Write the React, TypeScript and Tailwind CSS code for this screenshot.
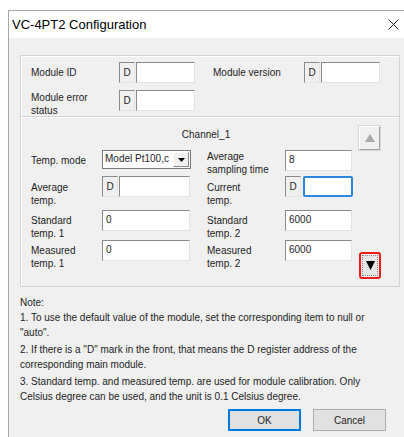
import React from 'react';

// sunken 3D edge used by the edit boxes
const sunken =
  'border border-t-[#8a8a8a] border-l-[#8a8a8a] border-b-[#e3e3e3] border-r-[#e3e3e3]';

const Label = ({ children, className = '' }: { children: React.ReactNode; className?: string }) => (
  <div className={`shrink-0 leading-[13px] text-[#1e1e1e] ${className}`}>{children}</div>
);

const Edit = ({ value = '', className = '', focus = false }: { value?: string; className?: string; focus?: boolean }) => (
  <div
    className={`h-[21px] shrink-0 bg-white px-[3px] pt-[3px] leading-[12px] ${
      focus ? 'rounded-[2px] border-2 border-[#2b86e0]' : sunken
    } ${className}`}
  >
    {value}
  </div>
);

const DTag = ({ className = '' }: { className?: string }) => (
  <div className={`flex h-[21px] w-[16px] shrink-0 items-center justify-center bg-[#f0f0f0] ${sunken} ${className}`}>D</div>
);

const DEdit = ({ className = '', focus = false, gap = 'gap-[1px]' }: { className?: string; focus?: boolean; gap?: string }) => (
  <div className={`flex shrink-0 ${gap}`}>
    <DTag />
    <Edit className={className} focus={focus} />
  </div>
);

const Combo = () => (
  <div className="flex h-[19px] w-[89px] shrink-0 border border-[#7a7a7a] bg-white">
    <div className="flex-1 overflow-hidden whitespace-nowrap pl-[2px] pt-[2px] leading-[12px]">Model Pt100,c</div>
    <div className="m-[1px] flex w-[16px] items-center justify-center border border-t-white border-l-white border-b-[#8a8a8a] border-r-[#8a8a8a] bg-[#f0f0f0]">
      <svg width="7" height="4" viewBox="0 0 7 4">
        <path d="M0 0h7L3.5 4z" fill="#000" />
      </svg>
    </div>
  </div>
);

export default function App() {
  return (
    <div className="h-[437px] w-[404px] overflow-hidden bg-white font-['Liberation_Sans',Arial,sans-serif] text-[10px] text-[#1e1e1e]">
      <div className="ml-[8px] mt-[10px] h-full border-l border-t border-[#a8a8a8] bg-[#f0f0f0]">
        {/* caption */}
        <div className="flex h-[27px] items-center justify-between bg-white pl-[3px] pr-[4px]">
          <span className="text-[13px] text-black">VC-4PT2 Configuration</span>
          <svg width="11" height="11" viewBox="0 0 11 11" className="mr-[1px]">
            <path d="M0.5 0.5l10 10M10.5 0.5l-10 10" stroke="#222" strokeWidth="1" />
          </svg>
        </div>

        <div className="pl-[11px] pr-[4px] pt-[17px]">
          {/* module box */}
          <div className="border border-[#d4d4d4] shadow-[inset_1px_1px_0_#ffffff]">
            <div className="flex flex-col gap-[7px] pb-[5px] pl-[10px] pt-[6px]">
              <div className="flex h-[21px] items-center">
                <Label className="w-[88px]">Module ID</Label>
                <DEdit className="w-[59px]" />
                <Label className="ml-[18px] w-[91px]">Module version</Label>
                <DEdit className="w-[59px]" />
              </div>
              <div className="flex h-[21px] items-start">
                <Label className="w-[88px] pt-[1px]">
                  Module error
                  <br />
                  status
                </Label>
                <DEdit className="w-[59px]" />
              </div>
            </div>

            {/* channel box */}
            <div className="grid grid-cols-[1fr_22px] border-t border-[#d4d4d4] pb-[7px] pl-[10px] pr-[18px] pt-[9px] shadow-[inset_0_1px_0_#ffffff]">
              <div className="col-span-2 col-start-1 row-start-1 pt-[3px] text-center leading-[12px]">Channel_1</div>
              <div className="col-start-2 row-start-1 flex h-[24px] w-[21px] items-center justify-center border border-t-white border-l-white border-b-[#a0a0a0] border-r-[#a0a0a0] bg-[#f0f0f0] shadow-[0_0_0_1px_#d8d8d8]">
                <svg width="10" height="8" viewBox="0 0 10 8">
                  <path d="M5 0l5 8H0z" fill="#a8a8a8" />
                </svg>
              </div>

              <div className="col-start-1 row-start-2 flex flex-col">
                <div className="flex h-[26px] items-start">
                  <Label className="w-[71px] pt-[4px]">Temp. mode</Label>
                  <Combo />
                  <Label className="ml-[16px] w-[78px]">
                    Average
                    <br />
                    sampling time
                  </Label>
                  <Edit value="8" className="w-[67px]" />
                </div>
                <div className="flex h-[34px] items-start">
                  <Label className="w-[71px] pt-[5px]">
                    Average
                    <br />
                    temp.
                  </Label>
                  <DEdit className="w-[71px]" gap="gap-[1px]" />
                  <Label className="ml-[17px] w-[78px] pt-[5px]">
                    Current
                    <br />
                    temp.
                  </Label>
                  <DEdit className="w-[50px]" gap="gap-[2px]" focus />
                </div>
                <div className="flex h-[30px] items-start">
                  <Label className="w-[71px] pt-[4px]">
                    Standard
                    <br />
                    temp. 1
                  </Label>
                  <Edit value="0" className="w-[88px]" />
                  <Label className="ml-[17px] w-[78px] pt-[4px]">
                    Standard
                    <br />
                    temp. 2
                  </Label>
                  <Edit value="6000" className="w-[67px]" />
                </div>
                <div className="flex h-[39px] items-start">
                  <Label className="w-[71px] pt-[4px]">
                    Measured
                    <br />
                    temp. 1
                  </Label>
                  <Edit value="0" className="w-[88px]" />
                  <Label className="ml-[17px] w-[78px] pt-[4px]">
                    Measured
                    <br />
                    temp. 2
                  </Label>
                  <Edit value="6000" className="w-[67px]" />
                </div>
              </div>
              <div className="col-start-2 row-start-2 flex items-end">
                <div className="flex h-[27px] w-[22px] rounded-[3px] border-2 border-[#f01c1c] p-[1px]">
                  <div className="flex flex-1 items-center justify-center border border-dotted border-[#8a8a8a] bg-[#e6e6e6]">
                    <svg width="9" height="9" viewBox="0 0 9 9">
                      <path d="M0 0h9L4.5 9z" fill="#000" />
                    </svg>
                  </div>
                </div>
              </div>
            </div>
          </div>

          {/* notes */}
          <div className="mt-[8px] pr-[14px] leading-[15px]">
            <p>Note:</p>
            <p>1. To use the default value of the module, set the corresponding item to null or "auto".</p>
            <p className="mt-[2px]">2. If there is a "D" mark in the front, that means the D register address of the corresponding main module.</p>
            <p className="mt-[2px]">3. Standard temp. and measured temp. are used for module calibration. Only Celsius degree can be used, and the unit is 0.1 Celsius degree.</p>
          </div>

          <div className="mt-[5px] flex justify-end gap-[12px] pr-[14px]">
            <button className="h-[22px] w-[73px] border-2 border-[#0078d7] bg-[#e1e1e1] text-[10px]">OK</button>
            <button className="h-[22px] w-[73px] border border-[#adadad] bg-[#e1e1e1] text-[10px]">Cancel</button>
          </div>
        </div>
      </div>
    </div>
  );
}
